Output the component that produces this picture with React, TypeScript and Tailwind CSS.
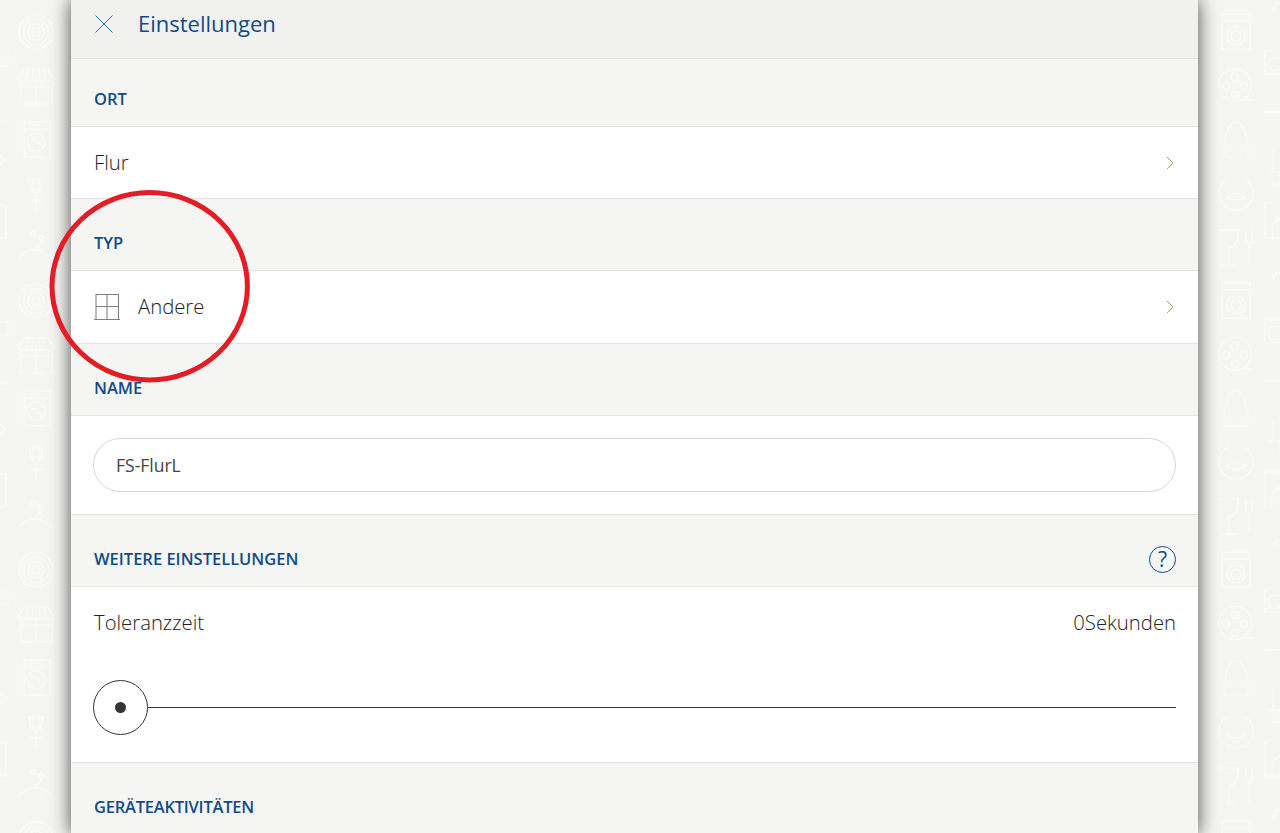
import React from "react";

const font = "[font-family:'Open_Sans',sans-serif]";

function Chevron() {
  return (
    <svg width="8" height="14" viewBox="0 0 8 14" fill="none" className="mr-[1px]">
      <path d="M1 1 L7 7 L1 13" stroke="#9aa86a" strokeWidth="1" />
    </svg>
  );
}

function SectionHead({ children, pt = 17, h = 71, right, tight }: { children: React.ReactNode; pt?: number; h?: number; right?: React.ReactNode; tight?: boolean }) {
  return (
    <div
      className="flex items-center justify-between bg-[#f5f5f3] border-b border-[#e4e4e2] pl-[23px] pr-[22px] box-content"
      style={{ height: h - pt, paddingTop: pt }}
    >
      <span className={`text-[16.5px] font-semibold text-[#114b86] leading-none ${tight ? "tracking-[-0.24px]" : ""}`}>{children}</span>
      {right}
    </div>
  );
}

function Row({ children, tall }: { children: React.ReactNode; tall?: boolean }) {
  return (
    <div className={`flex items-center justify-between bg-white border-b border-[#e4e4e2] pl-[23px] pr-[23px] box-content ${tall ? "h-[72px]" : "h-[71px]"}`}>
      {children}
    </div>
  );
}

function Tile({ x }: { x: "left" | "right" }) {
  if (x === "left") {
    return (
      <g fill="none" stroke="#fbfbfa" strokeWidth="1.2">
        <circle cx="36" cy="32" r="17" />
        <circle cx="36" cy="32" r="12.5" />
        <circle cx="36" cy="32" r="8" />
        <circle cx="36" cy="32" r="4" />
        <path d="M0 53H8V66H0M0 115H8M0 121H7M0 205H6V238H0M0 165L6 160L0 155" />
        <path d="M21 82V104H52V82M36 82V104M21 87H52M24 69H48L54 79Q51 83 45 80Q40 83 36 80Q31 83 27 80Q22 83 18 79Z" />
        <path d="M28 70L26 80M33 70L32 80M39 70L40 80M44 70L46 80" />
        <rect x="24" y="122" width="26" height="35" />
        <path d="M24 129H50M28 125H40" />
        <circle cx="36" cy="142" r="9" />
        <path d="M31 141Q36 137 38 142T42 143" />
        <path d="M29 179H43L41 190H31Z M31 190Q36 196 41 190M36 194V211M29 200H43M33 179V190M39 179V190" />
        <path d="M19 258A20 20 0 0 1 51 258M36 248L42 242" />
        <circle cx="33" cy="234" r="2.5" />
        <path d="M38 238l3-3 3 3-3 3z" />
      </g>
    );
  }
  return (
    <g fill="none" stroke="#fbfbfa" strokeWidth="1.2">
      <rect x="1222" y="14" width="28" height="35" />
      <path d="M1222 21H1250" />
      <circle cx="1236" cy="36" r="9" />
      <circle cx="1236" cy="36" r="5" />
      <circle cx="1235" cy="85" r="16.5" />
      <circle cx="1235" cy="77" r="3.5" />
      <circle cx="1235" cy="95" r="3.5" />
      <circle cx="1226" cy="86" r="3.5" />
      <circle cx="1244" cy="86" r="3.5" />
      <path d="M1241 100H1254" />
      <path d="M1224 157V145Q1228 122 1236 122Q1244 122 1248 145V157Z" />
      <path d="M1228 178A17 17 0 1 0 1244 178" />
      <path d="M1226 197Q1236 190 1246 197Q1236 203 1226 197Z" />
      <path d="M1219 230H1238Q1240 245 1229 248V264M1221 265H1237" />
      <path d="M1246 230V243M1252 230V243M1246 243H1252M1249 243V264" />
      <path d="M1265 51H1280M1265 74H1280M1265 51V74" />
      <circle cx="1275" cy="64" r="7" />
      <path d="M1265 112H1280" />
      <path d="M1273 150V170M1268 172H1280V184H1272" />
      <path d="M1265 203H1280M1265 238H1280M1265 203V238M1272 238L1272 226Q1276 220 1280 218" />
      <path d="M1274 12a4 7 0 0 1 6 -8" />
    </g>
  );
}

function Wallpaper() {
  return (
    <svg width="1280" height="833" className="absolute left-0 top-0">
      <defs>
        <pattern id="wall" x="0" y="0" width="1280" height="269" patternUnits="userSpaceOnUse">
          <Tile x="left" />
          <Tile x="right" />
        </pattern>
      </defs>
      <rect width="1280" height="833" fill="url(#wall)" />
    </svg>
  );
}

export default function App() {
  return (
    <div className={`relative h-[833px] w-[1280px] overflow-hidden bg-[#f5f5f3] ${font}`}>
      <Wallpaper />
      <div className="relative ml-[71px] w-[1127px] shadow-[0_0_18px_rgba(0,0,0,0.7)]">
        <div className="flex h-[58px] items-center gap-[25px] border-b border-[#e4e4e2] bg-[#f1f1f0] pl-[24px] box-content">
          <svg width="18" height="18" viewBox="0 0 18 18" fill="none" className="mb-[10px] self-center">
            <path d="M0.5 0.5 L17.5 17.5 M17.5 0.5 L0.5 17.5" stroke="#2f6fae" strokeWidth="1" />
          </svg>
          <span className="mb-[12px] text-[22px] leading-none text-[#114b86]">Einstellungen</span>
        </div>

        <SectionHead pt={13} h={67}>ORT</SectionHead>
        <Row>
          <span className="text-[20.3px] font-light text-[#222]">Flur</span>
          <Chevron />
        </Row>

        <SectionHead>TYP</SectionHead>
        <Row tall>
          <span className="flex items-center gap-[18px]">
            <svg width="26" height="28" viewBox="0 0 26 28" fill="none">
              <path d="M2 1.5H24.5V26.5H2ZM13 1.5V26.5M2 13.5H24.5M0 26.5H26" stroke="#808080" strokeWidth="1.1" />
            </svg>
            <span className="mb-[1px] text-[20.3px] font-light text-[#222]">Andere</span>
          </span>
          <Chevron />
        </Row>

        <SectionHead>NAME</SectionHead>
        <div className="border-b border-[#e4e4e2] bg-white px-[22px] py-[22px]">
          <div className="flex h-[54px] items-center rounded-full border border-[#d6d6d6] pl-[22px] text-[17.5px] text-[#444]">
            FS-FlurL
          </div>
        </div>

        <SectionHead
          right={
            <span className="mt-[1px] flex h-[27px] w-[27px] items-center justify-center rounded-full border-[1.5px] border-[#114b86] text-[21px] leading-none text-[#114b86]">
              ?
            </span>
          }
        >
          WEITERE EINSTELLUNGEN
        </SectionHead>

        <div className="border-b border-[#e4e4e2] bg-white pl-[23px] pr-[22px] pt-[21px]">
          <div className="flex items-center justify-between text-[20.3px] font-light leading-[28px] text-[#222]">
            <span>Toleranzzeit</span>
            <span>0Sekunden</span>
          </div>
          <div className="-ml-[1px] mt-[44px] flex h-[55px] items-center">
            <div className="flex h-[55px] w-[55px] shrink-0 items-center justify-center rounded-full border border-[#333] bg-white">
              <div className="h-[11px] w-[11px] rounded-full bg-[#333]" />
            </div>
            <div className="h-[1px] flex-1 bg-[#333]" />
          </div>
          <div className="h-[27px]" />
        </div>

        <SectionHead tight>GERÄTEAKTIVITÄTEN</SectionHead>
      </div>

      <svg width="210" height="200" viewBox="0 0 210 200" fill="none" className="absolute left-[44px] top-[186px]">
        <ellipse cx="105.7" cy="100.3" rx="97.7" ry="93.7" stroke="#e31c25" strokeWidth="5" />
      </svg>
    </div>
  );
}
